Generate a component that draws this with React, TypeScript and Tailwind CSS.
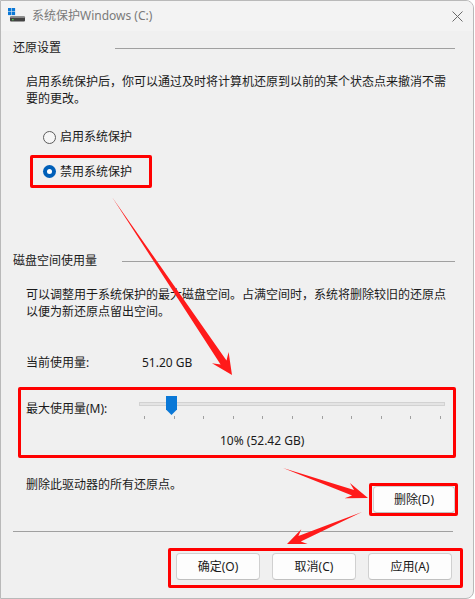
import React from 'react';

const font = "font-['Noto_Sans','Noto_Sans_CJK_SC',sans-serif]";

// polygon for a hand-drawn style red arrow (tail tapers to a point)
function arrowPoints(tx: number, ty: number, hx: number, hy: number, headLen: number, headHalf: number, shaftHalf: number) {
  const dx = hx - tx;
  const dy = hy - ty;
  const len = Math.hypot(dx, dy);
  const ux = dx / len;
  const uy = dy / len;
  const nx = -uy;
  const ny = ux;
  const wingX = hx - ux * headLen;
  const wingY = hy - uy * headLen;
  const joinX = hx - ux * headLen * 0.72;
  const joinY = hy - uy * headLen * 0.72;
  const pts = [
    [tx, ty],
    [joinX + nx * shaftHalf, joinY + ny * shaftHalf],
    [wingX + nx * headHalf, wingY + ny * headHalf],
    [hx, hy],
    [wingX - nx * headHalf, wingY - ny * headHalf],
    [joinX - nx * shaftHalf, joinY - ny * shaftHalf],
  ];
  return pts.map(p => `${p[0].toFixed(1)},${p[1].toFixed(1)}`).join(' ');
}

const GroupHeader: React.FC<{ title: string; lineWidth: string }> = ({ title, lineWidth }) => (
  <div className="flex items-center h-4 pl-[12px] mr-[18px]">
    <span className="text-[12px] leading-4 text-[#1a1a1a]">{title}</span>
    <div className={`ml-auto h-px bg-[#a0a0a0] ${lineWidth}`} />
  </div>
);

const WinButton: React.FC<{ label: string; className?: string }> = ({ label, className }) => (
  <button className={`h-[27px] w-[84px] bg-[#fdfdfd] border border-[#d0d0d0] border-b-[#c0c0c0] rounded-[4px] text-[12px] text-[#1a1a1a] flex items-center justify-center ${className ?? ''}`}>
    {label}
  </button>
);

const ticks = Array.from({ length: 11 }, (_, i) => 5 + i * 29.6);

const App: React.FC = () => {
  return (
    <div className={`${font} w-[475px] h-[599px] bg-white`}>
      <div className="relative w-[474px] h-[599px] bg-[#f0f0f0] border border-[#b9b9b9] rounded-r-[8px] overflow-hidden">
        {/* title bar */}
        <div className="h-[30px] bg-[#f3f3f3] flex items-center pl-[7px] pr-[10px]">
          <svg width="18" height="16" viewBox="0 0 18 16">
            <rect x="0" y="0" width="3.3" height="3.3" fill="#0a78d7" />
            <rect x="3.8" y="0" width="3.3" height="3.3" fill="#0a78d7" />
            <rect x="0" y="3.8" width="3.3" height="3.3" fill="#0a78d7" />
            <rect x="3.8" y="3.8" width="3.3" height="3.3" fill="#0a78d7" />
            <rect x="2" y="8.5" width="15" height="5" rx="1" fill="#444" />
            <rect x="2" y="8.5" width="15" height="1.5" rx="0.7" fill="#888" />
            <rect x="4" y="11" width="1.6" height="1.3" fill="#4cd14c" />
          </svg>
          <span className="ml-[6px] text-[12px] text-[#7a7a7a] leading-4">系统保护Windows (C:)</span>
          <svg className="ml-auto" width="11" height="11" viewBox="0 0 11 11">
            <path d="M0.5 0.5 L10.5 10.5 M10.5 0.5 L0.5 10.5" stroke="#6a6a6a" strokeWidth="1" />
          </svg>
        </div>

        <div className="mt-[9px]">
          <GroupHeader title="还原设置" lineWidth="w-[340px]" />
        </div>

        <div className="mt-[17px] pl-[25px] pr-[20px] text-[12px] leading-[17px] text-[#1a1a1a]">
          启用系统保护后，你可以通过及时将计算机还原到以前的某个状态点来撤消不需要的更改。
        </div>

        {/* radios */}
        <div className="mt-[20px] h-5 flex items-center pl-[42px]">
          <span className="w-[13px] h-[13px] rounded-full border border-[#5c5c5c] bg-[#f6f6f6]" />
          <span className="ml-[4px] text-[12px] text-[#1a1a1a]">启用系统保护</span>
        </div>
        <div className="mt-[8px] ml-[29px] w-[122px] h-[33px] border-[3px] border-[#ff0000] rounded-[2px] flex items-center pl-[10px]">
          <span className="w-[13px] h-[13px] rounded-full bg-[#005fb8] flex items-center justify-center">
            <span className="w-[5px] h-[5px] rounded-full bg-white" />
          </span>
          <span className="ml-[4px] text-[12px] text-[#1a1a1a]">禁用系统保护</span>
        </div>

        <div className="mt-[65px]">
          <GroupHeader title="磁盘空间使用量" lineWidth="w-[333px]" />
        </div>

        <div className="mt-[17px] pl-[25px] pr-[20px] text-[12px] leading-[17px] text-[#1a1a1a]">
          可以调整用于系统保护的最大磁盘空间。占满空间时，系统将删除较旧的还原点以便为新还原点留出空间。
        </div>

        <div className="mt-[34px] pl-[25px] h-[17px] flex items-center text-[12px] text-[#1a1a1a]">
          <span className="w-[116px]">当前使用量:</span>
          <span>51.20 GB</span>
        </div>

        {/* max usage box */}
        <div className="mt-[16px] ml-[17px] w-[438px] h-[71px] border-[3px] border-[#ff0000] rounded-[2px]">
          <div className="flex items-start">
            <span className="pl-[5px] w-[118px] mt-[10px] h-[17px] flex items-center text-[12px] text-[#1a1a1a]">最大使用量(M):</span>
            <div className="relative mt-[4px] w-[306px] h-[28px]">
              <div className="absolute left-0 right-0 top-[8px] h-[4px] bg-[#e4e4e4] border border-[#d2d2d2]" />
              <svg className="absolute left-[27px] top-[2px]" width="11" height="19" viewBox="0 0 11 19">
                <path d="M0 0 H11 V13.5 L5.5 19 L0 13.5 Z" fill="#0a78d7" />
              </svg>
              {ticks.map((x, i) => (
                <div key={i} className="absolute top-[22px] w-px h-[3px] bg-[#a0a0a0]" style={{ left: x }} />
              ))}
            </div>
          </div>
          <div className="mt-[10px] ml-[199px] h-[17px] flex items-center text-[12px] text-[#1a1a1a]">10% (52.42 GB)</div>
        </div>

        {/* delete row */}
        <div className="mt-[18px] flex items-start pl-[25px] mr-[15px]">
          <span className="h-[17px] flex items-center text-[12px] text-[#1a1a1a]">删除此驱动器的所有还原点。</span>
          <div className="ml-auto mt-[7px] w-[89px] h-[33px] border-[3px] border-[#ff0000] rounded-[2px] pl-[1px] pt-[0px] flex items-center">
            <WinButton label="删除(D)" className="w-[82px]" />
          </div>
        </div>

        <div className="mt-[15px] ml-[12px] mr-[20px] h-px bg-[#a0a0a0]" />

        <div className="mt-[16px] ml-auto mr-[10px] w-[295px] h-[40px] border-[3px] border-[#ff0000] rounded-[2px] flex items-start pl-[5px] pt-[2px] gap-[12px]">
          <WinButton label="确定(O)" />
          <WinButton label="取消(C)" />
          <WinButton label="应用(A)" />
        </div>

        {/* annotation arrows */}
        <svg className="absolute left-[-1px] top-[-1px] pointer-events-none" width="475" height="599" viewBox="0 0 475 599">
          <polygon points={arrowPoints(112, 197, 232, 375, 21, 10, 3.5)} fill="#ff1a1a" />
          <polygon points={arrowPoints(283, 468, 368, 498, 22, 8, 3)} fill="#ff1a1a" />
          <polygon points={arrowPoints(362, 512, 287, 544, 19, 8, 3)} fill="#ff1a1a" />
        </svg>
      </div>
    </div>
  );
};

export default App;
